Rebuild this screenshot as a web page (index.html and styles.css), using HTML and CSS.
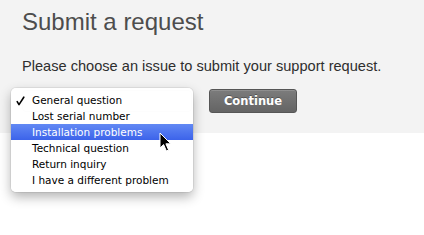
FILE: index.html
```html
<!DOCTYPE html>
<html>
<head>
<meta charset="utf-8">
<link rel="stylesheet" href="styles.css">
</head>
<body>
<div class="panel">
  <h1 class="title">Submit a request</h1>
  <p class="intro">Please choose an issue to submit your support request.</p>
  <div class="row">
    <div class="select">
      <div class="menu">
        <div class="item checked"><svg class="check" width="9" height="10" viewBox="0 0 9 10"><path d="M1.2 5.6 L3 8.6 L7.8 1.2" fill="none" stroke="#000" stroke-width="1.6" stroke-linecap="round" stroke-linejoin="round"/></svg>General question</div>
        <div class="item">Lost serial number</div>
        <div class="item active">Installation problems</div>
        <div class="item">Technical question</div>
        <div class="item">Return inquiry</div>
        <div class="item">I have a different problem</div>
      </div>
    </div>
    <button class="btn">Continue</button>
  </div>
</div>
<svg class="cursor" width="14" height="21" viewBox="0 0 14 21">
  <path d="M1 1 L1 16 L4.6 12.6 L7.4 19 L9.6 18 L6.9 11.8 L11.8 11.8 Z" fill="#000" stroke="#fff" stroke-width="1" stroke-linejoin="round"/>
</svg>
</body>
</html>
```
FILE: styles.css
```css
html, body {
  margin: 0;
  padding: 0;
  background: #fff;
}
body {
  position: relative;
  width: 424px;
  height: 235px;
  overflow: hidden;
  font-family: "Liberation Sans", Arial, sans-serif;
}
.panel {
  background: #f3f3f3;
  height: 133px;
  box-sizing: border-box;
  padding: 8px 22px 0 22px;
}
.title {
  margin: 0;
  font-size: 24px;
  line-height: 28px;
  font-weight: normal;
  color: #4d4d4d;
}
.intro {
  margin: 21px 0 0 0;
  font-size: 14.6px;
  line-height: 18px;
  color: #2e2e2e;
}
.row {
  display: flex;
  align-items: center;
  gap: 17px;
  margin-top: 14px;
  height: 24px;
}
.select {
  position: relative;
  width: 170px;
  height: 22px;
  box-sizing: border-box;
  border: 1px solid #b5b5b5;
  border-radius: 4px;
  background: #fff;
}
.menu {
  position: absolute;
  left: -12px;
  top: -3px;
  width: 182px;
  box-sizing: border-box;
  padding: 4px 0;
  background: rgba(255, 255, 255, 0.97);
  border-radius: 5px;
  box-shadow: 0 0 0 1px rgba(0, 0, 0, 0.06), 0 5px 12px rgba(0, 0, 0, 0.3);
  font-family: "DejaVu Sans", Verdana, sans-serif;
  font-size: 10.5px;
  color: #000;
}
.item {
  position: relative;
  height: 16px;
  line-height: 16px;
  padding-left: 21px;
  white-space: nowrap;
}
.check {
  position: absolute;
  left: 5px;
  top: 4px;
}
.active {
  background: linear-gradient(#6289f4, #3c63ea);
  color: #fff;
}
.btn {
  width: 88px;
  height: 24px;
  padding: 0;
  border: 1px solid #565656;
  border-radius: 3px;
  background: linear-gradient(#7c7c7c, #646464);
  color: #fff;
  font-family: "DejaVu Sans", Verdana, sans-serif;
  font-weight: bold;
  font-size: 11.5px;
  text-shadow: 0 -1px 0 rgba(0, 0, 0, 0.3);
  box-shadow: inset 0 1px 0 rgba(255, 255, 255, 0.15);
}
.cursor {
  position: absolute;
  left: 159px;
  top: 132px;
}
```
